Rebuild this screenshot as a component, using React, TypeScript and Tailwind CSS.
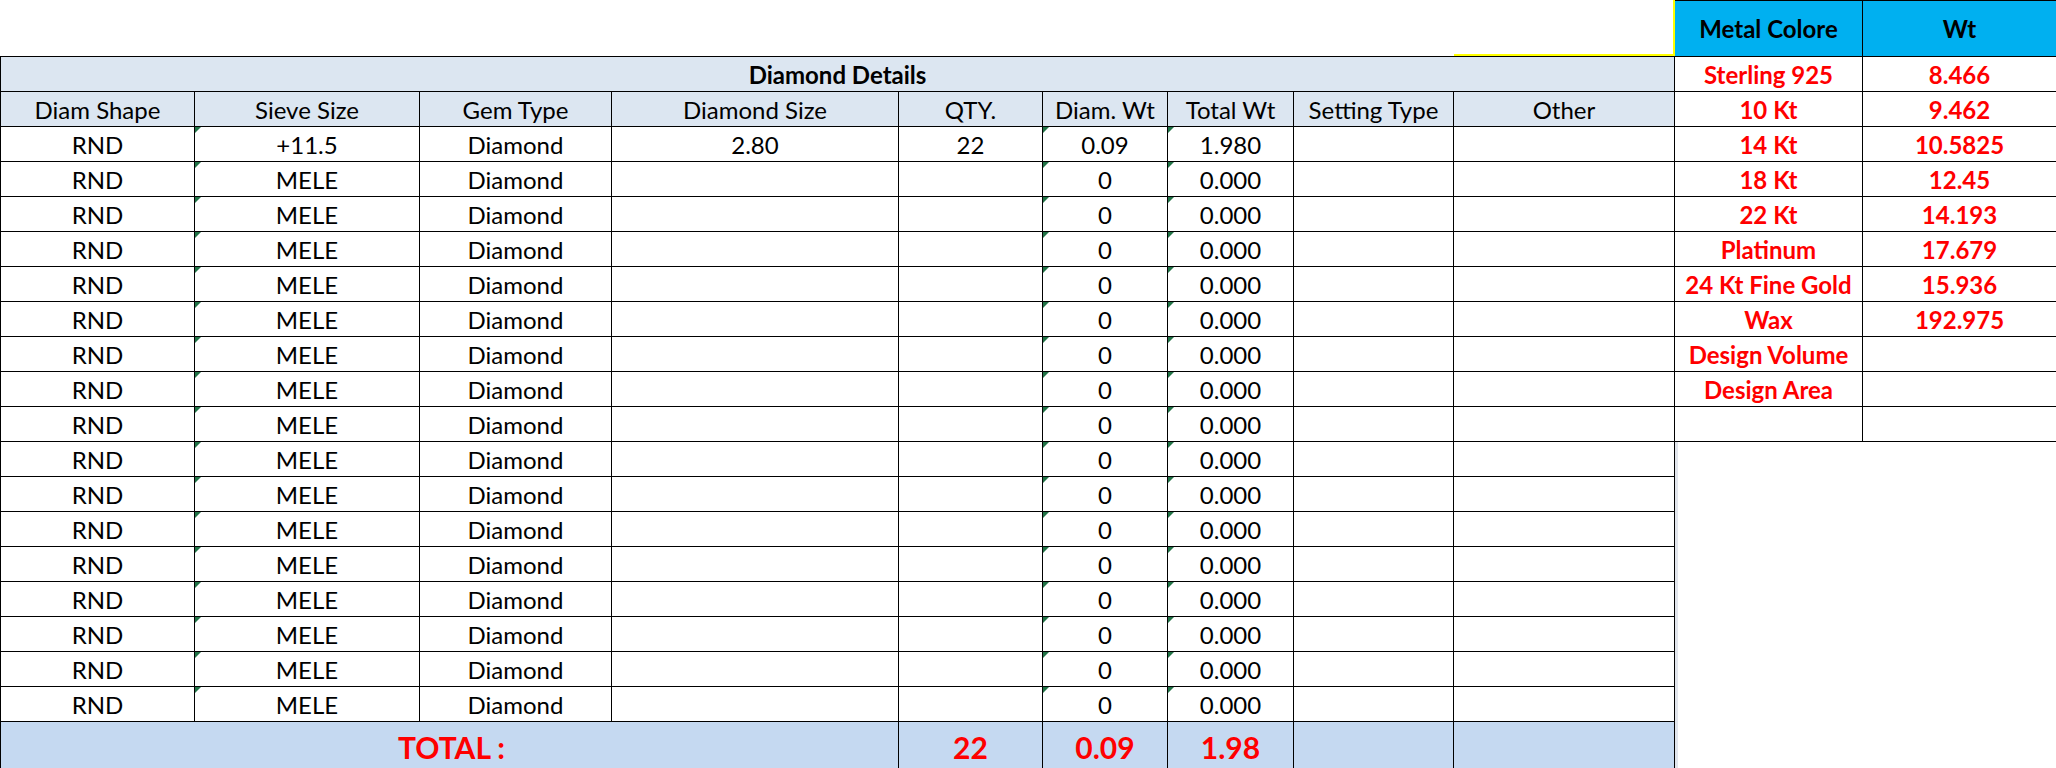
const COLS =
  "grid grid-cols-[194px_225px_192px_287px_144px_125px_126px_160px_221px]";

const headers = [
  "Diam Shape",
  "Sieve Size",
  "Gem Type",
  "Diamond Size",
  "QTY.",
  "Diam. Wt",
  "Total Wt",
  "Setting Type",
  "Other",
];

type Row = string[];

const rows: Row[] = [
  ["RND", "+11.5", "Diamond", "2.80", "22", "0.09", "1.980", "", ""],
  ...Array.from({ length: 16 }, () => ["RND", "MELE", "Diamond", "", "", "0", "0.000", "", ""]),
];

// columns that show Excel's green "number stored as text" marker
const flagged = [1, 5, 6];

const metals = [
  ["Sterling 925", "8.466"],
  ["10 Kt", "9.462"],
  ["14 Kt", "10.5825"],
  ["18 Kt", "12.45"],
  ["22 Kt", "14.193"],
  ["Platinum", "17.679"],
  ["24 Kt Fine Gold", "15.936"],
  ["Wax", "192.975"],
  ["Design Volume", ""],
  ["Design Area", ""],
  ["", ""],
];

function Marker() {
  return (
    <span className="absolute left-0 top-0 h-0 w-0 border-r-[6px] border-t-[6px] border-r-transparent border-t-[#217346]" />
  );
}

export default function App() {
  return (
    <div className="flex h-[768px] w-[2056px] overflow-hidden bg-white font-['Lato',sans-serif] text-[24px] leading-none text-black">
      {/* left sheet area */}
      <div className="flex w-[1675px] shrink-0 flex-col">
        <div className={`${COLS} h-[56px] shrink-0 pl-px`}>
          <div />
          <div />
          <div />
          <div />
          <div />
          <div />
          <div />
          <div />
          <div className="border-b-2 border-r-2 border-[#ffff00]" />
        </div>

        <div className="shrink-0 border-l border-t border-black">
          <div className="flex h-[35px] items-center justify-center border-b border-r border-black bg-[#dce6f1] pt-[2px] font-bold">
            Diamond Details
          </div>

          <div className={`${COLS} bg-[#dce6f1]`}>
            {headers.map((h) => (
              <div
                key={h}
                className="flex h-[35px] items-center justify-center border-b border-r border-black pt-[2px]"
              >
                {h}
              </div>
            ))}
          </div>

          {rows.map((r, i) => (
            <div key={i} className={COLS}>
              {r.map((c, j) => (
                <div
                  key={j}
                  className="relative flex h-[35px] items-center justify-center border-b border-r border-black pt-[2px]"
                >
                  {flagged.includes(j) && <Marker />}
                  {c}
                </div>
              ))}
            </div>
          ))}

          <div className={`${COLS} bg-[#c5d9f1] text-[30px] font-bold text-[#ff0000]`}>
            <div className="col-span-4 flex h-[50px] items-center justify-center border-r border-black pl-[4px]">
              TOTAL :
            </div>
            <div className="flex h-[50px] items-center justify-center border-r border-black">22</div>
            <div className="flex h-[50px] items-center justify-center border-r border-black">0.09</div>
            <div className="flex h-[50px] items-center justify-center border-r border-black">1.98</div>
            <div className="h-[50px] border-r border-black" />
            <div className="h-[50px] border-r border-black" />
          </div>
        </div>
      </div>

      {/* metal weight table */}
      <div className="flex w-[381px] shrink-0 flex-col">
        <div className="grid h-[57px] shrink-0 grid-cols-[188px_193px] border-t border-black bg-[#00b0f0] font-bold">
          <div className="flex items-center justify-center border-b border-r border-black">Metal Colore</div>
          <div className="flex items-center justify-center border-b border-black">Wt</div>
        </div>
        {metals.map(([name, wt], i) => (
          <div key={i} className="grid shrink-0 grid-cols-[188px_193px] font-bold text-[#ff0000]">
            <div className="flex h-[35px] items-center justify-center border-b border-r border-black pt-[2px]">
              {name}
            </div>
            <div className="flex h-[35px] items-center justify-center border-b border-black pt-[2px]">
              {wt}
            </div>
          </div>
        ))}
        <div className="flex-1 border-l-[3px] border-[#e1e5ec]" />
      </div>
    </div>
  );
}
